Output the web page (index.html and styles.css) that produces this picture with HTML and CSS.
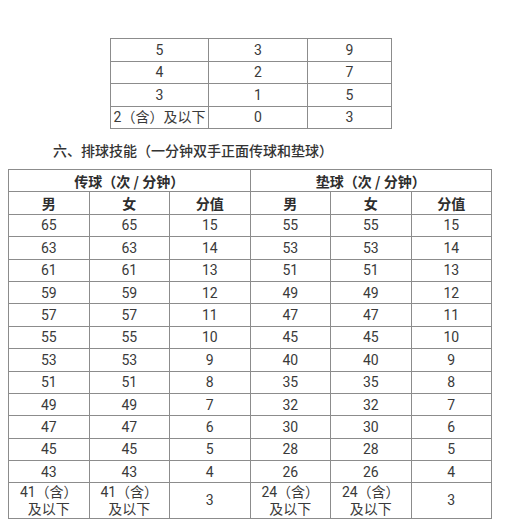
FILE: index.html
```html
<!DOCTYPE html>
<html lang="zh">
<head>
<meta charset="utf-8">
<link rel="stylesheet" href="styles.css">
</head>
<body>
<div class="page">
  <table class="small">
    <colgroup><col class="c1"><col class="c2"><col class="c3"></colgroup>
    <tr><td>5</td><td>3</td><td>9</td></tr>
    <tr><td>4</td><td>2</td><td>7</td></tr>
    <tr><td>3</td><td>1</td><td>5</td></tr>
    <tr><td>2（含）及以下</td><td>0</td><td>3</td></tr>
  </table>
  <h2 class="heading">六、排球技能（一分钟双手正面传球和垫球）</h2>
  <table class="main">
    <colgroup><col><col><col><col><col><col></colgroup>
    <tr class="hd"><th colspan="3">传球（次 / 分钟）</th><th colspan="3">垫球（次 / 分钟）</th></tr>
    <tr class="hd"><th>男</th><th>女</th><th>分值</th><th>男</th><th>女</th><th>分值</th></tr>
    <tr><td>65</td><td>65</td><td>15</td><td>55</td><td>55</td><td>15</td></tr>
    <tr><td>63</td><td>63</td><td>14</td><td>53</td><td>53</td><td>14</td></tr>
    <tr><td>61</td><td>61</td><td>13</td><td>51</td><td>51</td><td>13</td></tr>
    <tr><td>59</td><td>59</td><td>12</td><td>49</td><td>49</td><td>12</td></tr>
    <tr><td>57</td><td>57</td><td>11</td><td>47</td><td>47</td><td>11</td></tr>
    <tr><td>55</td><td>55</td><td>10</td><td>45</td><td>45</td><td>10</td></tr>
    <tr><td>53</td><td>53</td><td>9</td><td>40</td><td>40</td><td>9</td></tr>
    <tr><td>51</td><td>51</td><td>8</td><td>35</td><td>35</td><td>8</td></tr>
    <tr><td>49</td><td>49</td><td>7</td><td>32</td><td>32</td><td>7</td></tr>
    <tr><td>47</td><td>47</td><td>6</td><td>30</td><td>30</td><td>6</td></tr>
    <tr><td>45</td><td>45</td><td>5</td><td>28</td><td>28</td><td>5</td></tr>
    <tr><td>43</td><td>43</td><td>4</td><td>26</td><td>26</td><td>4</td></tr>
    <tr class="last"><td>41（含）<br>及以下</td><td>41（含）<br>及以下</td><td>3</td><td>24（含）<br>及以下</td><td>24（含）<br>及以下</td><td>3</td></tr>
  </table>
</div>
</body>
</html>
```
FILE: styles.css
```css
html, body {
  margin: 0;
  padding: 0;
  background: #ffffff;
}
body {
  font-family: Roboto, "Noto Sans CJK SC", sans-serif;
  color: #3a3a3a;
  font-size: 14px;
}
.page {
  padding: 38px 0 0 8px;
  width: 484px;
}
table {
  border-collapse: collapse;
  table-layout: fixed;
}
td, th {
  border: 1px solid #8c8c8c;
  padding: 0;
  text-align: center;
  vertical-align: middle;
  line-height: 16px;
}
.small {
  margin-left: 102px;
  width: 281px;
}
.small .c1 { width: 98px; }
.small .c2 { width: 99px; }
.small .c3 { width: 84px; }
.small td {
  height: 21.5px;
}
.heading {
  margin: 0;
  padding: 11px 0 0 45px;
  height: 29px;
  font-size: 14px;
  font-weight: 500;
  line-height: 20px;
  color: #333;
  font-family: "Noto Sans CJK SC", sans-serif;
}
.main {
  width: 484px;
}
.main td, .main th {
  height: 21.4px;
}
.main th {
  font-weight: 700;
  font-family: "Noto Sans CJK SC", sans-serif;
  color: #2e2e2e;
}
.main .last td {
  height: 35px;
  line-height: 17px;
}
```
